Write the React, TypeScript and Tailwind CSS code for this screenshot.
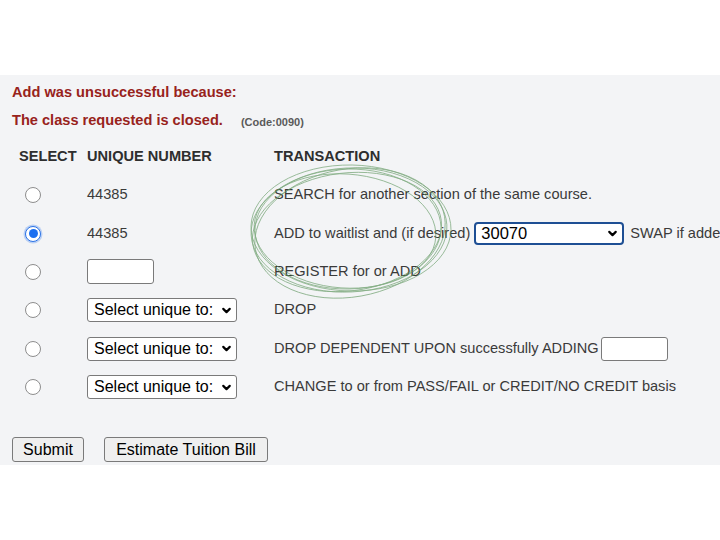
import React from 'react';
import { ChevronDown } from 'lucide-react';

const Radio: React.FC<{ checked?: boolean }> = ({ checked }) =>
  checked ? (
    <span className="flex h-[16px] w-[16px] items-center justify-center rounded-full border-[1.5px] border-[#2a72e6] bg-white shadow-[0_0_0_1.5px_rgba(80,140,240,0.35)]">
      <span className="h-[9px] w-[9px] rounded-full bg-[#1b6ff0]" />
    </span>
  ) : (
    <span className="block h-[16px] w-[16px] rounded-full border border-[#8d8d8d] bg-white" />
  );

const UniqueSelect: React.FC = () => (
  <div className="flex h-[24px] w-[150px] items-center justify-between rounded-[3px] border border-[#7a7a7a] bg-white pl-[6px] pr-[3px] text-[16px] text-black">
    <span>Select unique to:</span>
    <ChevronDown className="h-[13px] w-[13px]" strokeWidth={4} />
  </div>
);

const TextBox: React.FC = () => (
  <div className="h-[25px] w-[67px] rounded-[3px] border border-[#7a7a7a] bg-white" />
);

const Row: React.FC<{ checked?: boolean; unique: React.ReactNode; children: React.ReactNode }> = ({
  checked,
  unique,
  children,
}) => (
  <div className="flex h-[38.4px] items-center">
    <div className="flex w-[75px] shrink-0 pl-[13px]">
      <Radio checked={checked} />
    </div>
    <div className="flex w-[187px] shrink-0 items-center">{unique}</div>
    <div className="flex shrink-0 items-center whitespace-nowrap">{children}</div>
  </div>
);

const Scribble: React.FC = () => (
  <svg
    className="pointer-events-none absolute left-0 top-0"
    width="720"
    height="390"
    viewBox="0 0 720 390"
    fill="none"
  >
    <g stroke="#5f965f" strokeWidth="0.8" opacity="0.75">
      <ellipse cx="349" cy="155" rx="98" ry="62" transform="rotate(-3 349 155)" />
      <ellipse cx="347" cy="157" rx="95" ry="59" transform="rotate(-7 347 157)" />
      <ellipse cx="351" cy="153" rx="100" ry="63" transform="rotate(1 351 153)" />
      <ellipse cx="345" cy="156" rx="91" ry="57" transform="rotate(4 345 156)" />
      <ellipse cx="350" cy="158" rx="96" ry="64" transform="rotate(-10 350 158)" />
      <ellipse cx="348" cy="154" rx="93" ry="60" transform="rotate(-1 348 154)" />
    </g>
  </svg>
);

const App: React.FC = () => {
  return (
    <div className="min-h-[540px] w-[720px] overflow-hidden bg-white font-['Liberation_Sans',Arial,sans-serif]">
      <div className="h-[75px]" />

      <div className="relative overflow-hidden bg-[#f3f4f6] pb-[3px] pt-[4px]">
        <Scribble />

        <div className="px-[12px]">
          <div className="flex h-[28px] items-center text-[14.6px] font-bold text-[#98231c]">
            Add was unsuccessful because:
          </div>
          <div className="flex h-[28px] items-center">
            <span className="text-[14.6px] font-bold text-[#98231c]">The class requested is closed.</span>
            <span className="ml-[18px] mt-[2px] text-[11px] font-bold text-[#5a5a5a]">(Code:0090)</span>
          </div>
        </div>

        <div className="mt-[3px] flex h-[38px] items-center text-[14.6px] font-bold text-[#2e2e2e]">
          <div className="w-[87px] pl-[19px]">SELECT</div>
          <div className="w-[187px]">UNIQUE NUMBER</div>
          <div>TRANSACTION</div>
        </div>

        <div className="pl-[12px] text-[14.6px] text-[#3a3a3a]">
          <Row unique={<span>44385</span>}>SEARCH for another section of the same course.</Row>
          <Row checked unique={<span>44385</span>}>
            <span>ADD to waitlist and (if desired)</span>
            <div className="ml-[4px] flex h-[23px] w-[150px] items-center justify-between rounded-[4px] border-2 border-[#1e4f94] bg-white pl-[5px] pr-[3px] text-[16.5px] text-black">
              <span>30070</span>
              <ChevronDown className="h-[13px] w-[13px]" strokeWidth={4} />
            </div>
            <span className="ml-[6px]">SWAP if added</span>
          </Row>
          <Row unique={<TextBox />}>REGISTER for or ADD</Row>
          <Row unique={<UniqueSelect />}>DROP</Row>
          <Row unique={<UniqueSelect />}>
            <span>DROP DEPENDENT UPON successfully ADDING</span>
            <div className="ml-[2px] h-[24px] w-[67px] rounded-[3px] border border-[#7a7a7a] bg-white" />
          </Row>
          <Row unique={<UniqueSelect />}>CHANGE to or from PASS/FAIL or CREDIT/NO CREDIT basis</Row>
        </div>

        <div className="mt-[31px] flex gap-[20px] px-[12px]">
          <button className="h-[25px] w-[72px] rounded-[3px] border border-[#7a7a7a] bg-[#efefef] text-[16px] text-black">
            Submit
          </button>
          <button className="h-[25px] w-[164px] rounded-[3px] border border-[#7a7a7a] bg-[#efefef] text-[16px] text-black">
            Estimate Tuition Bill
          </button>
        </div>
      </div>
    </div>
  );
};

export default App;
